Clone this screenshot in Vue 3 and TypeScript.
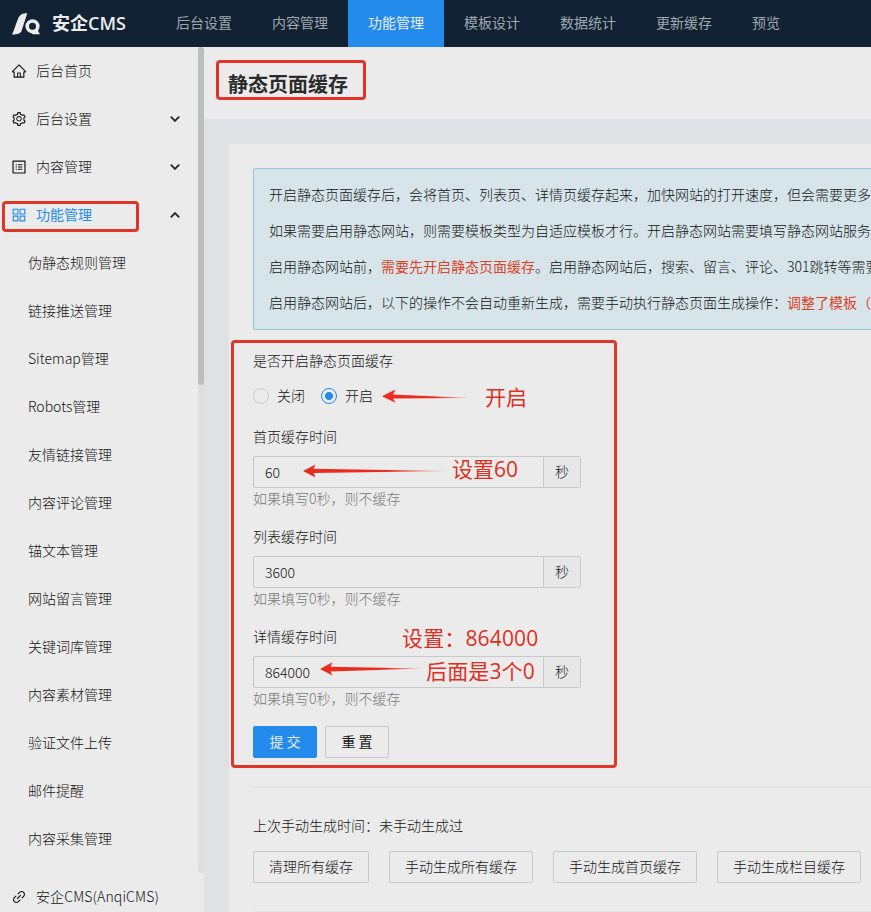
<script setup lang="ts">
interface NavItem {
  label: string
  active?: boolean
}
interface MenuItem {
  label: string
  icon: string
  arrow?: 'up' | 'down'
  active?: boolean
}
interface Field {
  label: string
  value: string
}

const nav: NavItem[] = [
  { label: '后台设置' },
  { label: '内容管理' },
  { label: '功能管理', active: true },
  { label: '模板设计' },
  { label: '数据统计' },
  { label: '更新缓存' },
  { label: '预览' },
]

const icons: Record<string, string> = {
  home: 'M946.5 505L560.1 118.8l-25.9-25.9a31.5 31.5 0 00-44.4 0L77.5 505a63.9 63.9 0 00-18.8 46c.4 35.2 29.7 63.3 64.9 63.3h42.5V940h691.8V614.3h43.4c17.1 0 33.2-6.7 45.3-18.8a63.6 63.6 0 0018.7-45.3c0-17-6.7-33.1-18.8-45.2zM568 868H456V664h112v204zm217.9-325.7V868H632V640c0-22.1-17.9-40-40-40H432c-22.1 0-40 17.9-40 40v228H238.1V542.3h-96l370-369.7 23.1 23.1L882 542.3h-96.1z',
  setting:
    'M924.8 625.7l-65.5-56c3.1-19 4.7-38.4 4.7-57.8s-1.6-38.8-4.7-57.8l65.5-56a32.03 32.03 0 009.3-35.2l-.9-2.6a443.74 443.74 0 00-79.7-137.9l-1.8-2.1a32.12 32.12 0 00-35.1-9.5l-81.3 28.9c-30-24.6-63.5-44-99.7-57.6l-15.7-85a32.05 32.05 0 00-25.8-25.7l-2.7-.5c-52.1-9.4-106.9-9.4-159 0l-2.7.5a32.05 32.05 0 00-25.8 25.7l-15.8 85.4a351.86 351.86 0 00-99 57.4l-81.9-29.1a32 32 0 00-35.1 9.5l-1.8 2.1a446.02 446.02 0 00-79.7 137.9l-.9 2.6c-4.5 12.5-.8 26.5 9.3 35.2l66.3 56.6c-3.1 18.8-4.6 38-4.6 57.1 0 19.2 1.5 38.4 4.6 57.1L99 625.5a32.03 32.03 0 00-9.3 35.2l.9 2.6c18.1 50.4 44.9 96.9 79.7 137.9l1.8 2.1a32.12 32.12 0 0035.1 9.5l81.9-29.1c29.8 24.5 63.1 43.9 99 57.4l15.8 85.4a32.05 32.05 0 0025.8 25.7l2.7.5a449.4 449.4 0 00159 0l2.7-.5a32.05 32.05 0 0025.8-25.7l15.7-85a350 350 0 0099.7-57.6l81.3 28.9a32 32 0 0035.1-9.5l1.8-2.1c34.8-41.1 61.6-87.5 79.7-137.9l.9-2.6c4.5-12.3.8-26.3-9.3-35zM788.3 465.9c2.5 15.1 3.8 30.6 3.8 46.1s-1.3 31-3.8 46.1l-6.6 40.1 74.7 63.9a370.03 370.03 0 01-42.6 73.6L721 702.8l-31.4 25.8c-23.9 19.6-50.5 35-79.3 45.8l-38.1 14.3-17.9 97a377.5 377.5 0 01-85 0l-17.9-97.2-37.8-14.5c-28.5-10.8-55-26.2-78.7-45.7l-31.4-25.9-93.4 33.2c-17-22.9-31.2-47.6-42.6-73.6l75.5-64.5-6.5-40c-2.4-14.9-3.7-30.3-3.7-45.5 0-15.3 1.2-30.6 3.7-45.5l6.5-40-75.5-64.5c11.3-26.1 25.6-50.7 42.6-73.6l93.4 33.2 31.4-25.9c23.7-19.5 50.2-34.9 78.7-45.7l37.9-14.3 17.9-97.2c28.1-3.2 56.8-3.2 85 0l17.9 97 38.1 14.3c28.7 10.8 55.4 26.2 79.3 45.8l31.4 25.8 92.8-32.9c17 22.9 31.2 47.6 42.6 73.6L781.8 426l6.5 39.9zM512 326c-97.2 0-176 78.8-176 176s78.8 176 176 176 176-78.8 176-176-78.8-176-176-176zm79.2 255.2A111.6 111.6 0 01512 614c-29.9 0-58-11.7-79.2-32.8A111.6 111.6 0 01400 502c0-29.9 11.7-58 32.8-79.2C454 401.6 482.1 390 512 390c29.9 0 58 11.6 79.2 32.8A111.6 111.6 0 01624 502c0 29.9-11.7 58-32.8 79.2z',
  profile:
    'M900 92H124c-17.700 0-32 14.300-32 32v776c0 17.700 14.300 32 32 32h776c17.700 0 32-14.300 32-32V124c0-17.700-14.300-32-32-32zm-44 764H168V168h688v688zM300 330h80v72h-80zM300 476h80v72h-80zM300 622h80v72h-80zM450 330h274v72H450zM450 476h274v72H450zM450 622h274v72H450z',
  appstore:
    'M464 104H130c-14 0-26 12-26 26v334c0 8.800 7.200 16 16 16h344c8.800 0 16-7.200 16-16V120c0-8.800-7.200-16-16-16zm-56 304H176V176h232v232zm496-304H560c-8.800 0-16 7.200-16 16v344c0 8.800 7.200 16 16 16h344c8.800 0 16-7.200 16-16V120c0-8.800-7.200-16-16-16zm-56 304H616V176h232v232zM464 544H120c-8.800 0-16 7.200-16 16v344c0 8.800 7.200 16 16 16h344c8.800 0 16-7.200 16-16V560c0-8.800-7.200-16-16-16zm-56 304H176V616h232v232zm496-304H560c-8.800 0-16 7.200-16 16v344c0 8.800 7.200 16 16 16h344c8.800 0 16-7.200 16-16V560c0-8.800-7.200-16-16-16zm-56 304H616V616h232v232z',
  link: 'M574 665.4a8.03 8.03 0 00-11.3 0L446.5 781.6c-53.8 53.8-144.6 59.5-204 0-59.5-59.5-53.8-150.2 0-204l116.2-116.2c3.1-3.1 3.1-8.2 0-11.3l-39.8-39.8a8.03 8.03 0 00-11.3 0L191.4 526.5c-84.6 84.6-84.6 221.5 0 306s221.5 84.6 306 0l116.2-116.2c3.1-3.1 3.1-8.2 0-11.3L574 665.4zm258.6-474c-84.6-84.6-221.5-84.6-306 0L410.3 307.6a8.03 8.03 0 000 11.3l39.7 39.7c3.1 3.1 8.2 3.1 11.3 0l116.2-116.2c53.8-53.8 144.6-59.5 204 0 59.5 59.5 53.8 150.2 0 204L665.3 562.6a8.03 8.03 0 000 11.3l39.8 39.8c3.1 3.1 8.2 3.1 11.3 0l116.2-116.2c84.5-84.6 84.5-221.5 0-306.1zM610.1 372.3a8.03 8.03 0 00-11.3 0L372.3 598.7a8.03 8.03 0 000 11.3l39.6 39.6c3.1 3.1 8.2 3.1 11.3 0l226.4-226.4c3.1-3.1 3.1-8.2 0-11.3l-39.5-39.6z',
}

const menu: MenuItem[] = [
  { label: '后台首页', icon: 'home' },
  { label: '后台设置', icon: 'setting', arrow: 'down' },
  { label: '内容管理', icon: 'profile', arrow: 'down' },
  { label: '功能管理', icon: 'appstore', arrow: 'up', active: true },
]

const submenu: string[] = [
  '伪静态规则管理',
  '链接推送管理',
  'Sitemap管理',
  'Robots管理',
  '友情链接管理',
  '内容评论管理',
  '锚文本管理',
  '网站留言管理',
  '关键词库管理',
  '内容素材管理',
  '验证文件上传',
  '邮件提醒',
  '内容采集管理',
]

const fields: Field[] = [
  { label: '首页缓存时间', value: '60' },
  { label: '列表缓存时间', value: '3600' },
  { label: '详情缓存时间', value: '864000' },
]

const actions: string[] = ['清理所有缓存', '手动生成所有缓存', '手动生成首页缓存', '手动生成栏目缓存']
</script>

<template>
  <div class="app">
    <header class="topbar">
      <div class="brand">
        <svg class="logo" width="30" height="24" viewBox="0 0 30 24">
          <path d="M0 22.500C2.300 18 3.600 12.500 5.800 7.200 7.600 2.800 10 1.200 15.300 1.200L9.600 18.800C8.800 21.300 6 22.500 0 22.500Z" fill="#ececec" />
          <circle cx="20.500" cy="14.300" r="5.300" fill="none" stroke="#ececec" stroke-width="3.600" />
          <path d="M19.500 18h6l2.500 4.200h-7.500z" fill="#ececec" />
        </svg>
        <span class="brand-name">安企CMS</span>
      </div>
      <nav class="nav">
        <a v-for="n in nav" :key="n.label" class="nav-item" :class="{ active: n.active }">{{ n.label }}</a>
      </nav>
    </header>

    <div class="body">
      <aside class="sidebar">
        <div class="scroll">
          <div class="menu">
            <div v-for="m in menu" :key="m.label" class="menu-item" :class="{ active: m.active }">
              <svg class="icon" viewBox="0 0 1024 1024"><path :d="icons[m.icon]" fill="currentColor" /></svg>
              <span class="menu-label">{{ m.label }}</span>
              <svg v-if="m.arrow" class="chevron" :class="m.arrow" viewBox="0 0 10 6">
                <path d="M.8 .7l4.200 4.200L9.200 .7" fill="none" stroke="#2b2b2b" stroke-width="1.900" />
              </svg>
            </div>
            <div v-for="s in submenu" :key="s" class="sub-item">{{ s }}</div>
          </div>
          <div class="track"><div class="thumb"></div></div>
        </div>
        <div class="menu-item">
          <svg class="icon" viewBox="0 0 1024 1024"><path :d="icons.link" fill="currentColor" /></svg>
          <span class="menu-label latin">安企CMS(AnqiCMS)</span>
        </div>
      </aside>

      <main class="main">
        <div class="page-head"><h1>静态页面缓存</h1></div>
        <section class="card">
          <div class="alert">
            <p>开启静态页面缓存后，会将首页、列表页、详情页缓存起来，加快网站的打开速度，但会需要更多</p>
            <p>如果需要启用静态网站，则需要模板类型为自适应模板才行。开启静态网站需要填写静态网站服务</p>
            <p>启用静态网站前，<em>需要先开启静态页面缓存</em>。启用静态网站后，搜索、留言、评论、301跳转等需要</p>
            <p>启用静态网站后，以下的操作不会自动重新生成，需要手动执行静态页面生成操作：<em>调整了模板（</em></p>
          </div>

          <div class="form">
            <div class="group first">
              <div class="label">是否开启静态页面缓存</div>
              <div class="radios">
                <span class="radio"></span><span class="radio-text">关闭</span>
                <span class="radio on"></span><span class="radio-text">开启</span>
              </div>
            </div>
            <div v-for="f in fields" :key="f.label" class="group">
              <div class="label">{{ f.label }}</div>
              <div class="input">
                <div class="value">{{ f.value }}</div>
                <div class="unit">秒</div>
              </div>
              <div class="hint">如果填写0秒，则不缓存</div>
            </div>
            <div class="submit">
              <button class="btn primary">提 交</button>
              <button class="btn">重 置</button>
            </div>
          </div>

          <div class="divider"></div>
          <div class="last">上次手动生成时间：未手动生成过</div>
          <div class="actions">
            <button v-for="a in actions" :key="a" class="btn">{{ a }}</button>
          </div>
          <div class="divider end"></div>
        </section>
      </main>
    </div>

    <div class="frame frame-title"></div>
    <div class="frame frame-menu"></div>
    <div class="frame frame-form"></div>
    <span class="note note-on">开启</span>
    <span class="note note-home">设置60</span>
    <span class="note note-detail">设置：864000</span>
    <span class="note note-zeros">后面是3个0</span>
    <svg class="arrows" width="871" height="912" viewBox="0 0 871 912">
      <defs>
        <linearGradient id="fade"><stop offset=".6" stop-color="#ea2c20" /><stop offset="1" stop-color="#ea2c20" stop-opacity=".35" /></linearGradient>
      </defs>
      <path d="M382 396.300L395.500 389.500L393 394.500L470 397.900L393 398.500L395.500 402.800Z" fill="url(#fade)" />
      <path d="M303 471L315.500 464.500L313.500 468.700L448 470.900L313.500 473.100L315.500 477.500Z" fill="url(#fade)" />
      <path d="M320 669L332.500 662.300L330.500 666.700L423 668.400L330.500 671.400L332.500 675.500Z" fill="url(#fade)" />
    </svg>
  </div>
</template>

<style>
body {
  overflow: hidden;
}
</style>

<style scoped>
.app {
  position: relative;
  height: 912px;
  overflow: hidden;
  display: flex;
  flex-direction: column;
  background: #dfe1e5;
  color: #141414;
  font: 300 14px/22px 'Noto Sans CJK SC', sans-serif;
  white-space: nowrap;
}
.topbar {
  flex: none;
  height: 47px;
  display: flex;
  background: #102234;
}
.brand {
  width: 156px;
  display: flex;
  align-items: center;
  padding-left: 12px;
  box-sizing: border-box;
}
.logo {
  width: 30px;
  margin-right: 10px;
}
.brand-name {
  font-family: 'Open Sans', 'Noto Sans CJK SC', sans-serif;
  font-size: 18px;
  font-weight: 600;
  margin-top: -2px;
  color: #ececec;
}
.nav {
  display: flex;
}
.nav-item {
  padding: 0 20px;
  line-height: 45px;
  font-weight: 400;
  color: #a0a7ad;
}
.nav-item.active {
  background: #238bec;
  color: #ececec;
}
.body {
  flex: 1;
  min-height: 0;
  display: flex;
}
.sidebar {
  width: 204px;
  flex: none;
  background: #ebebeb;
}
.scroll {
  height: 826px;
  display: flex;
}
.menu {
  flex: 1;
}
.menu-item {
  height: 48px;
  display: flex;
  align-items: center;
  padding: 0 18px 0 11px;
}
.menu-item.active {
  font-weight: 400;
  color: #238bec;
}
.icon {
  width: 16px;
  height: 16px;
  margin-right: 9px;
}
.menu-label {
  flex: 1;
  margin-top: -2px;
}
.menu-label.latin {
  letter-spacing: 0.12px;
}
.chevron {
  width: 10px;
  height: 6px;
}
.chevron.up {
  transform: rotate(180deg);
}
.sub-item {
  height: 48px;
  line-height: 46px;
  padding-left: 28px;
}
.track {
  width: 6px;
  background: #dfdfdf;
  border-radius: 3px;
}
.thumb {
  height: 338px;
  border-radius: 3px;
  background: #bdbebe;
}
.main {
  flex: 1;
  min-width: 0;
  overflow: hidden;
}
.page-head {
  height: 72px;
  background: #ebebeb;
  padding-left: 24px;
  display: flex;
  align-items: center;
}
h1 {
  margin: 2px 0 0;
  font-size: 20px;
  line-height: 28px;
  font-weight: 700;
  color: #2b2b2b;
}
.card {
  margin: 25px 0 0 25px;
  padding: 24px 0 0 24px;
  background: #ebebeb;
  height: 800px;
}
.alert {
  width: 800px;
  box-sizing: border-box;
  padding: 7px 15px 9px;
  border: 1px solid #8fc7dc;
  border-radius: 2px;
  background: #d7e5eb;
}
.alert p {
  margin: 0;
  line-height: 36px;
}
.alert em {
  font-style: normal;
  font-weight: 400;
  color: #dc4326;
}
.form {
  padding-top: 15px;
}
.group {
  margin-bottom: 12px;
}
.group.first {
  margin-bottom: 9px;
}
.label {
  line-height: 30px;
  margin-bottom: 5px;
}
.radios {
  height: 32px;
  display: flex;
  align-items: center;
}
.radio {
  width: 16px;
  height: 16px;
  box-sizing: border-box;
  border: 1px solid #c9c9c9;
  border-radius: 50%;
}
.radio.on {
  border-color: #238bec;
  background: radial-gradient(circle, #238bec 3.700px, transparent 4.300px);
}
.radio-text {
  margin: -2px 16px 0 8px;
}
.input {
  width: 328px;
  height: 32px;
  box-sizing: border-box;
  display: flex;
  border: 1px solid #c9c9c9;
  border-radius: 2px;
}
.value {
  flex: 1;
  padding-left: 11px;
  line-height: 30px;
}
.unit {
  width: 36px;
  border-left: 1px solid #c9c9c9;
  background: #e7e7e7;
  text-align: center;
  line-height: 28px;
}
.hint {
  margin-top: -1px;
  color: #787878;
}
.submit {
  display: flex;
  gap: 8px;
  padding-top: 5px;
}
.btn {
  height: 32px;
  padding: 0 15px 2px;
  border: 1px solid #c9c9c9;
  border-radius: 2px;
  background: #ebebeb;
  color: #141414;
  font: inherit;
}
.submit .btn {
  width: 64px;
  padding: 0 0 2px;
  font-weight: 400;
}
.btn.primary {
  background: #238bec;
  border-color: #238bec;
  color: #ececec;
}
.divider {
  height: 2px;
  margin-top: 28px;
  background: #e4e4e4;
}
.last {
  margin-top: 26px;
}
.actions {
  display: flex;
  gap: 20px;
  margin-top: 15px;
}
.frame {
  position: absolute;
  box-sizing: border-box;
  border: 3px solid #e03529;
  border-radius: 4px;
}
.frame-title {
  left: 216px;
  top: 60px;
  width: 150px;
  height: 40px;
}
.frame-menu {
  left: 2px;
  top: 201px;
  width: 137px;
  height: 31px;
}
.frame-form {
  left: 231px;
  top: 340px;
  width: 386px;
  height: 428px;
}
.note {
  position: absolute;
  font: 400 21px/30px 'Open Sans', 'Noto Sans CJK SC', sans-serif;
  color: #dc3024;
}
.note-on {
  left: 485px;
  top: 382px;
}
.note-home {
  left: 452px;
  top: 454px;
}
.note-detail {
  left: 402px;
  top: 623px;
  letter-spacing: 0.15px;
}
.note-zeros {
  left: 426px;
  top: 656px;
  letter-spacing: 0.15px;
}
.arrows {
  position: absolute;
  left: 0;
  top: 0;
}
</style>
